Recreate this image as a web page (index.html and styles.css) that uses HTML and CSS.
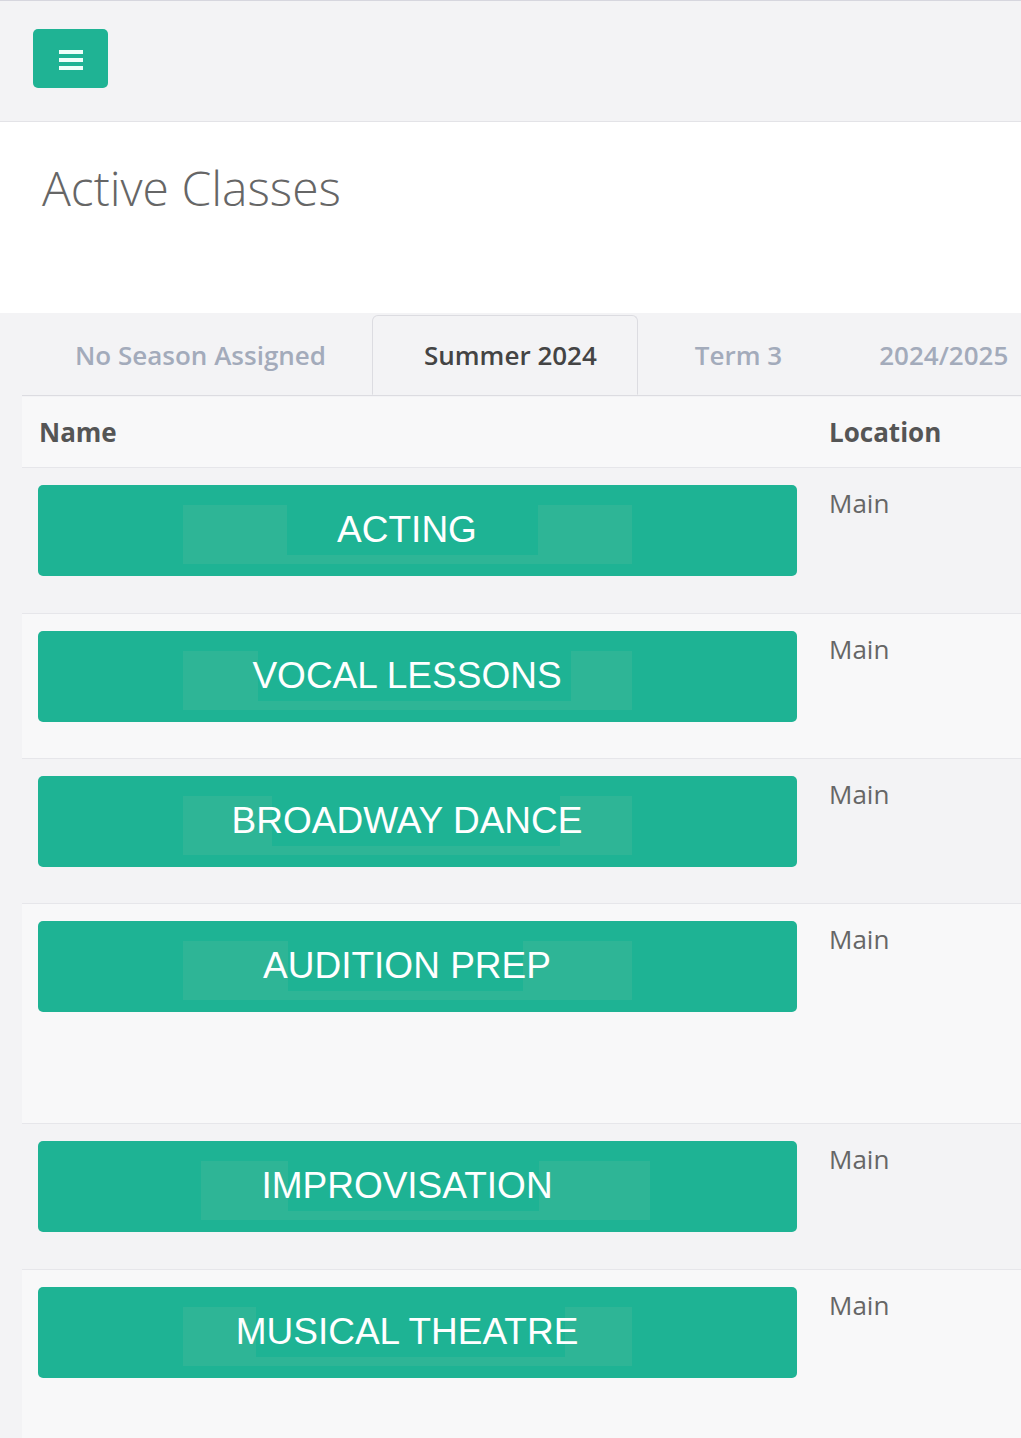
FILE: index.html
```html
<!DOCTYPE html>
<html lang="en">
<head>
<meta charset="utf-8">
<title>Active Classes</title>
<link rel="stylesheet" href="styles.css">
</head>
<body>
<header class="topbar">
  <button class="menu-btn" type="button" aria-label="Menu">
    <span class="bar"></span><span class="bar"></span><span class="bar"></span>
  </button>
</header>
<section class="page-head">
  <h1 class="page-title">Active Classes</h1>
</section>
<main class="content">
  <nav class="tabs">
    <div class="tab tab-1">No Season Assigned</div>
    <div class="tab tab-active">Summer 2024</div>
    <div class="tab tab-3">Term 3</div>
    <div class="tab tab-4">2024/2025</div>
  </nav>
  <div class="table">
    <div class="thead">
      <div class="th th-name">Name</div>
      <div class="th th-loc">Location</div>
    </div>
    <div class="row row-odd row-first">
      <div class="cell-name"><div class="class-btn"><span class="glow"></span><span class="mask" style="--mx:249px;--mw:251px"></span><span class="label">ACTING</span></div></div>
      <div class="cell-loc">Main</div>
    </div>
    <div class="row row-even">
      <div class="cell-name"><div class="class-btn"><span class="glow"></span><span class="mask" style="--mx:220px;--mw:313px"></span><span class="label">VOCAL LESSONS</span></div></div>
      <div class="cell-loc">Main</div>
    </div>
    <div class="row row-odd">
      <div class="cell-name"><div class="class-btn"><span class="glow"></span><span class="mask" style="--mx:234px;--mw:288px"></span><span class="label">BROADWAY DANCE</span></div></div>
      <div class="cell-loc">Main</div>
    </div>
    <div class="row row-even row-tall">
      <div class="cell-name"><div class="class-btn"><span class="glow"></span><span class="mask" style="--mx:250px;--mw:235px"></span><span class="label">AUDITION PREP</span></div></div>
      <div class="cell-loc">Main</div>
    </div>
    <div class="row row-odd row-first">
      <div class="cell-name"><div class="class-btn"><span class="glow glow-shift"></span><span class="mask" style="--mx:250px;--mw:251px"></span><span class="label">IMPROVISATION</span></div></div>
      <div class="cell-loc">Main</div>
    </div>
    <div class="row row-even row-last">
      <div class="cell-name"><div class="class-btn"><span class="glow"></span><span class="mask" style="--mx:218px;--mw:309px"></span><span class="label">MUSICAL THEATRE</span></div></div>
      <div class="cell-loc">Main</div>
    </div>
  </div>
</main>
</body>
</html>
```

FILE: styles.css
```css
html, body {
  margin: 0;
  padding: 0;
  overflow: hidden;
}
body {
  background: #f3f3f5;
  font-family: "Open Sans", "Noto Sans", sans-serif;
  color: #666;
  width: 1021px;
}

/* top bar */
.topbar {
  box-sizing: border-box;
  height: 122px;
  border-top: 1px solid #d6d6de;
  border-bottom: 1px solid #e3e3e7;
  padding: 28px 0 0 33px;
  background: #f3f3f5;
}
.menu-btn {
  width: 75px;
  height: 59px;
  border: none;
  border-radius: 5px;
  background: #1fb394;
  display: flex;
  flex-direction: column;
  align-items: center;
  justify-content: center;
  gap: 4px;
  padding: 2px 0 0 0;
  cursor: pointer;
}
.bar {
  display: block;
  width: 24px;
  height: 4px;
  background: #effffa;
}

/* heading panel */
.page-head {
  box-sizing: border-box;
  height: 191px;
  background: #ffffff;
  padding: 37px 42px 0 42px;
}
.page-title {
  margin: 0;
  font-family: "Open Sans", sans-serif;
  font-weight: 300;
  font-size: 48px;
  line-height: 1.2;
  color: #666666;
}

/* tabs */
.content {
  margin-left: 22px;
  width: 1100px;
}
.tabs {
  display: flex;
  margin-top: 2px;
  height: 81px;
  box-sizing: border-box;
  border-bottom: 1px solid #dcdce1;
}
.tab {
  font-size: 26px;
  font-weight: 600;
  line-height: 80px;
  color: #a3abbb;
  white-space: nowrap;
}
.tab-1 { padding: 0 46px 0 53px; }
.tab-3 { padding: 0 50px 0 57px; }
.tab-4 { padding: 0 50px 0 47px; }
.tab-active {
  padding: 0 40px 0 51px;
  color: #444444;
  border: 1px solid #dcdce1;
  border-bottom: 1px solid #f3f3f5;
  border-radius: 6px 6px 0 0;
  background: #f3f3f5;
  line-height: 78px;
  height: 80px;
  box-sizing: border-box;
}

/* table */
.thead, .row {
  display: grid;
  grid-template-columns: 791px 1fr;
}
.thead {
  margin-top: 1px;
  height: 71px;
  box-sizing: border-box;
  background: #f8f8f9;
  border-bottom: 1px solid #e6e6ea;
}
.th {
  font-size: 26px;
  font-weight: 700;
  color: #555555;
  line-height: 70px;
}
.th-name { padding-left: 17px; }
.th-loc { padding-left: 16px; }

.row {
  box-sizing: border-box;
  height: 145px;
  border-bottom: 1px solid #e6e6ea;
}
.row-first { height: 146px; }
.row-odd { background: #f3f3f5; }
.row-even { background: #f8f8f9; }
.row-tall { height: 220px; }
.row-last { height: 200px; border-bottom: none; }

.cell-name {
  padding: 17px 16px 0 16px;
}
.cell-loc {
  padding: 16px 0 0 16px;
  font-size: 26px;
  line-height: 38px;
  color: #666666;
}

/* class buttons */
.class-btn {
  display: grid;
  grid-template-columns: 1fr;
  grid-template-rows: 91px;
  height: 91px;
  border-radius: 5px;
  background: #1eb394;
  overflow: hidden;
}
.class-btn > span {
  grid-area: 1 / 1;
}
.glow {
  justify-self: start;
  align-self: start;
  margin: 20px 0 0 145px;
  width: 449px;
  height: 59px;
  background: #2eb596;
}
.glow-shift {
  margin-left: 163px;
}
.mask {
  justify-self: start;
  align-self: start;
  margin: 20px 0 0 var(--mx);
  width: var(--mw);
  height: 50px;
  background: #1eb394;
}
.label {
  justify-self: center;
  align-self: start;
  margin: 26px 21px 0 0;
  font-family: "Liberation Sans", Arial, sans-serif;
  font-size: 37px;
  line-height: 37px;
  color: #ffffff;
  white-space: nowrap;
  position: relative;
}
```
